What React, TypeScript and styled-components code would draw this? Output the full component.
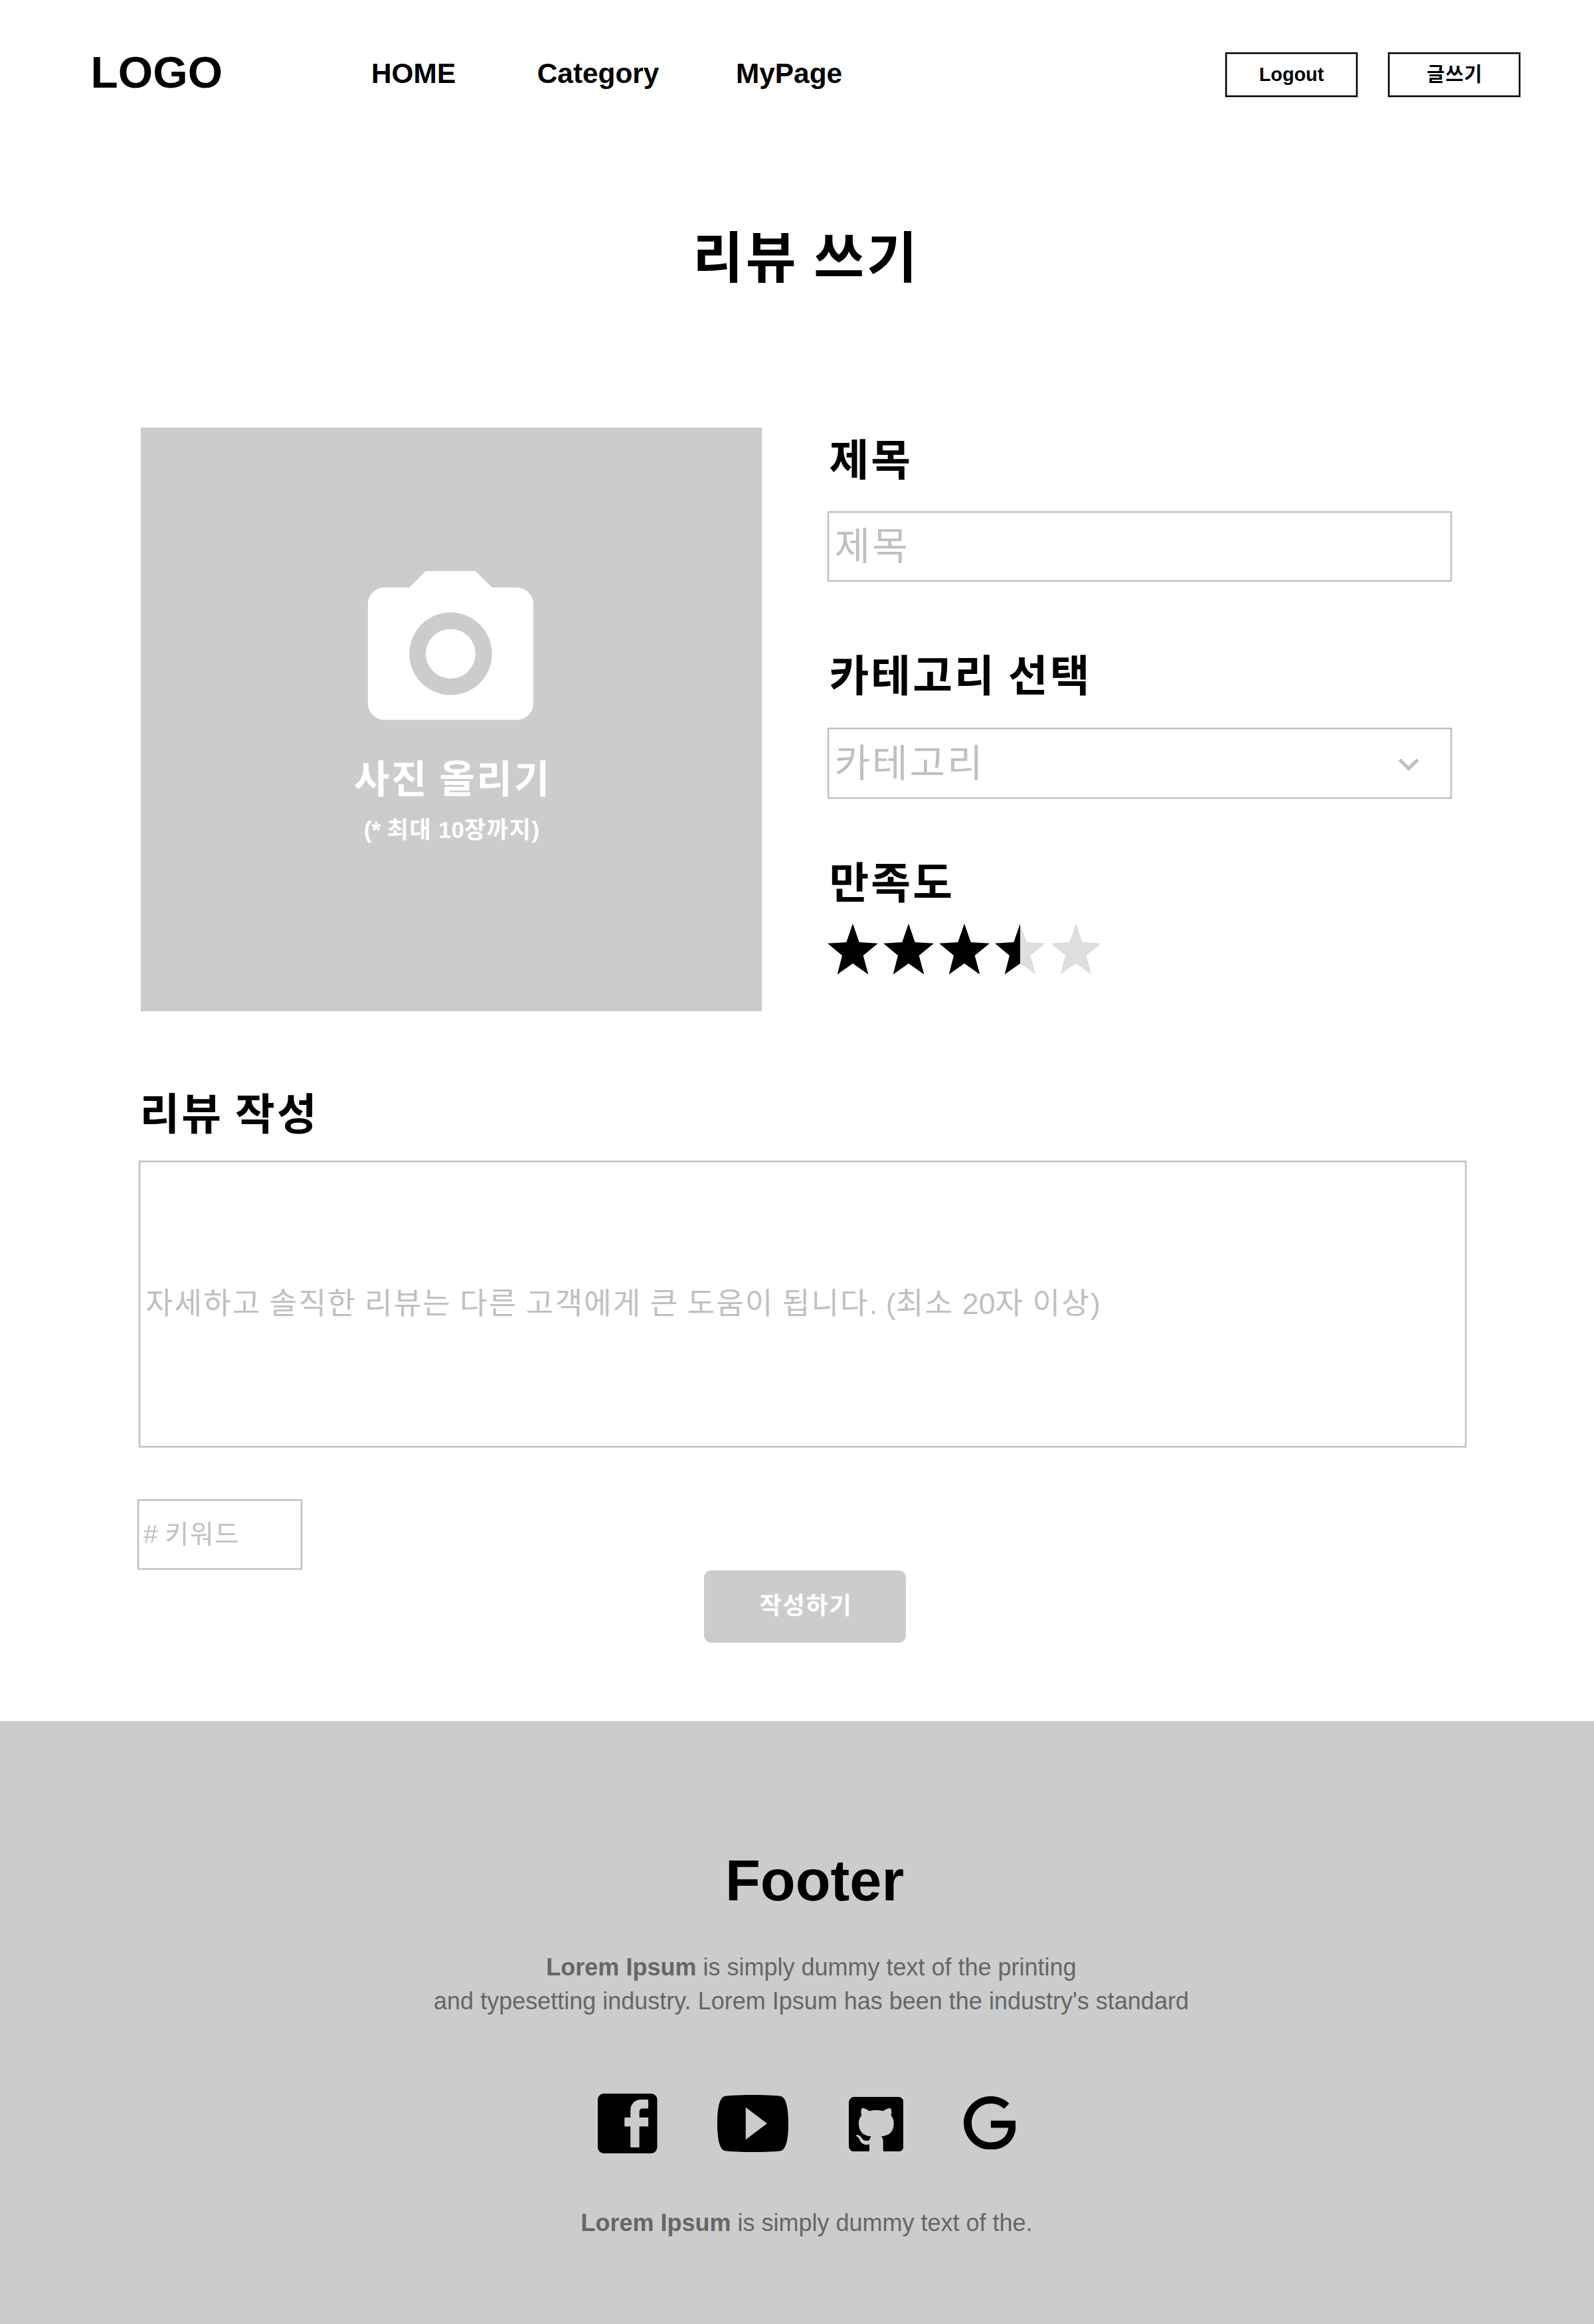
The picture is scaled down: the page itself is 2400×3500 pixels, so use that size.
import React from 'react';
import styled, { createGlobalStyle, css } from 'styled-components';

const GlobalStyle = createGlobalStyle`
  *, *::before, *::after { box-sizing: border-box; }
  body {
    margin: 0;
    background: #fff;
    color: #000;
    font-family: "Liberation Sans", "Noto Sans CJK KR", sans-serif;
  }
`;

/* Hangul is set slightly open, with the word gaps kept tight. */
const hangul = css`
  letter-spacing: 0.047em;
  word-spacing: -0.05em;
`;

const Latin = styled.span`
  letter-spacing: 0;
  word-spacing: 0;
`;

const Page = styled.div`
  width: 2400px;
  height: 3500px;
  display: flex;
  flex-direction: column;
  overflow: hidden;
  white-space: nowrap;
`;

/* Header */

const Header = styled.header`
  height: 225px;
  flex: none;
  display: flex;
  align-items: center;
  padding: 0 111px 0 136.5px;
`;

const Logo = styled.div`
  width: 422.5px;
  padding-bottom: 9px;
  font-size: 67.5px;
  line-height: 75px;
  font-weight: 700;
`;

const Nav = styled.nav`
  display: flex;
  padding-bottom: 4px;
`;

const NavLink = styled.a<{ $after?: number }>`
  margin-right: ${(p) => p.$after ?? 0}px;
  font-size: 42.4px;
  line-height: 47px;
  font-weight: 700;
`;

const Actions = styled.div`
  display: flex;
  gap: 46px;
  margin-left: auto;
`;

const OutlineButton = styled.div<{ $hangul?: boolean }>`
  width: 199px;
  height: 67px;
  display: flex;
  align-items: center;
  justify-content: center;
  border: 2px solid #000;
  box-shadow: 0 0 0 1px rgba(0, 0, 0, 0.25), inset 0 0 0 1px rgba(0, 0, 0, 0.35);
  font-size: 28.8px;
  line-height: 33px;
  font-weight: 700;
  ${(p) =>
    p.$hangul &&
    css`
      ${hangul}
      padding-left: 2px;
      font-size: 29.2px;
    `}
`;

/* Review form */

const Main = styled.main`
  height: 2367px;
  flex: none;
  display: flex;
  flex-direction: column;
  padding: 115px 192px 0 209px;
`;

const PageTitle = styled.h1`
  margin: 0 0 205px;
  padding-left: 11px;
  font-size: 82.5px;
  line-height: 99px;
  font-weight: 700;
  text-align: center;
  ${hangul}
`;

const FormRow = styled.section`
  display: flex;
  align-items: flex-start;
  padding-left: 3px;
`;

const PhotoDrop = styled.div`
  width: 935px;
  height: 879px;
  flex: none;
  display: flex;
  flex-direction: column;
  align-items: center;
  padding-top: 191px;
  background: #ccc;
  color: #fff;
`;

const CameraIcon = styled.svg`
  width: 299px;
  height: 299px;
  margin-right: 2px;
  flex: none;
  fill: #fff;
`;

const PhotoTitle = styled.div`
  margin-top: 6px;
  padding-left: 4px;
  font-size: 58.2px;
  line-height: 67px;
  font-weight: 700;
  ${hangul}
`;

const PhotoHint = styled.div`
  margin-top: 22px;
  padding-left: 1px;
  font-size: 35px;
  line-height: 41px;
  font-weight: 700;
  ${hangul}
`;

const Fields = styled.div`
  width: 940px;
  margin-left: 99px;
  padding-top: 13px;
`;

const FieldLabel = styled.h2<{ $top?: number; $bottom?: number; $left?: number }>`
  margin: ${(p) => p.$top ?? 0}px 0 ${(p) => p.$bottom ?? 0}px;
  padding-left: ${(p) => p.$left ?? 2.5}px;
  font-size: 65px;
  line-height: 73px;
  padding-bottom: 1px;
  font-weight: 700;
  ${hangul}
`;

const Box = styled.div`
  display: flex;
  align-items: center;
  border: 2px solid #c0c0c0;
  box-shadow: 0 0 0 1px rgba(192, 192, 192, 0.15), inset 0 0 0 1px rgba(192, 192, 192, 0.35);
  color: #c0c0c0;
  ${hangul}
`;

const TitleInput = styled(Box)`
  height: 106px;
  padding: 0 0 1px 8.5px;
  font-size: 58.4px;
  line-height: 67px;
`;

const CategorySelect = styled(Box)`
  height: 107px;
  padding: 0 0 1px 8.5px;
  font-size: 58.4px;
  line-height: 67px;
`;

const ChevronIcon = styled.svg`
  width: 62px;
  height: 62px;
  margin: 3px 32px 0 auto;
  fill: #c0c0c0;
`;

const Stars = styled.div`
  display: flex;
  gap: 8.1px;
`;

const StarIcon = styled.svg`
  width: 76px;
  height: 77px;
  display: block;
`;

const ReviewSection = styled.section`
  display: flex;
  flex-direction: column;
  margin-top: 119px;
`;

const ReviewInput = styled(Box)`
  height: 432px;
  padding: 0 0 1px 8px;
  font-size: 45.1px;
  line-height: 53px;
`;

const KeywordInput = styled(Box)`
  width: 248px;
  height: 106px;
  margin: 78px 0 0 -2px;
  padding: 0 0 1px 7px;
  font-size: 38.8px;
  line-height: 44px;
`;

const SubmitButton = styled.div`
  width: 304px;
  height: 109px;
  align-self: center;
  display: flex;
  align-items: center;
  justify-content: center;
  margin: 1px 0 0 7px;
  padding: 0 0 1px 3px;
  border-radius: 11px;
  background: #ccc;
  color: #fff;
  font-size: 36.2px;
  line-height: 42px;
  font-weight: 700;
  ${hangul}
`;

/* Footer */

const Footer = styled.footer`
  flex: 1;
  display: flex;
  flex-direction: column;
  align-items: center;
  padding: 192px 0 0 43px;
  background: #ccc;
`;

const FooterTitle = styled.h2`
  margin: 0 0 57px;
  padding-left: 10px;
  font-size: 86.5px;
  line-height: 96px;
  font-weight: 700;
`;

const FooterText = styled.p<{ $right?: number }>`
  margin: 0;
  padding-right: ${(p) => p.$right ?? 0}px;
  color: #666;
  font-size: 36px;
  line-height: 51px;
  text-align: center;
`;

const Socials = styled.div`
  height: 90px;
  display: flex;
  align-items: center;
  gap: 90.3px;
  margin: 114px 0 79px;
  padding-right: 13.5px;
`;

const SocialIcon = styled.svg<{ $lift?: number; $left?: number }>`
  margin-bottom: ${(p) => p.$lift ?? 0}px;
  margin-left: ${(p) => p.$left ?? 0}px;
  display: block;
  fill: #000;
`;

const STAR = '38,0 47.7,28 76,29.7 53.7,48 61.3,76.5 38,60 14.7,76.5 22,48 0,29.7 28.3,28';

function Star({ fill }: { fill: number }) {
  return (
    <StarIcon viewBox="0 0 76 77">
      <polygon points={STAR} fill={fill === 1 ? '#000' : '#dedede'} />
      {fill === 0.5 && <polygon points="38,0 38,60 14.7,76.5 22,48 0,29.7 28.3,28" fill="#000" />}
    </StarIcon>
  );
}

export default function App() {
  return (
    <Page>
      <GlobalStyle />
      <Header>
        <Logo>LOGO</Logo>
        <Nav>
          <NavLink $after={122.5}>HOME</NavLink>
          <NavLink $after={115.5}>Category</NavLink>
          <NavLink>MyPage</NavLink>
        </Nav>
        <Actions>
          <OutlineButton>Logout</OutlineButton>
          <OutlineButton $hangul>글쓰기</OutlineButton>
        </Actions>
      </Header>

      <Main>
        <PageTitle>리뷰 쓰기</PageTitle>
        <FormRow>
          <PhotoDrop>
            <CameraIcon viewBox="0 0 24 24">
              <path d="M4,4H7L9,2H15L17,4H20A2,2 0 0,1 22,6V18A2,2 0 0,1 20,20H4A2,2 0 0,1 2,18V6A2,2 0 0,1 4,4M12,7A5,5 0 0,0 7,12A5,5 0 0,0 12,17A5,5 0 0,0 17,12A5,5 0 0,0 12,7M12,9A3,3 0 0,1 15,12A3,3 0 0,1 12,15A3,3 0 0,1 9,12A3,3 0 0,1 12,9Z" />
            </CameraIcon>
            <PhotoTitle>사진 올리기</PhotoTitle>
            <PhotoHint>
              <Latin>(* </Latin>최대 <Latin>10</Latin>장까지<Latin>)</Latin>
            </PhotoHint>
          </PhotoDrop>
          <Fields>
            <FieldLabel $bottom={39}>제목</FieldLabel>
            <TitleInput>제목</TitleInput>
            <FieldLabel $top={106} $bottom={40}>카테고리 선택</FieldLabel>
            <CategorySelect>
              카테고리
              <ChevronIcon viewBox="0 0 24 24">
                <path d="M7.41,8.58L12,13.17L16.59,8.58L18,10L12,16L6,10L7.41,8.58Z" />
              </ChevronIcon>
            </CategorySelect>
            <FieldLabel $top={91} $bottom={23}>만족도</FieldLabel>
            <Stars>
              {[1, 1, 1, 0.5, 0].map((fill, i) => (
                <Star key={i} fill={fill} />
              ))}
            </Stars>
          </Fields>
        </FormRow>

        <ReviewSection>
          <FieldLabel $bottom={32} $left={1.5}>리뷰 작성</FieldLabel>
          <ReviewInput>
            <span>
              자세하고 솔직한 리뷰는 다른 고객에게 큰 도움이 됩니다<Latin>. (</Latin>최소 <Latin>20</Latin>자 이상<Latin>)</Latin>
            </span>
          </ReviewInput>
          <KeywordInput>
            <span>
              <Latin># </Latin>키워드
            </span>
          </KeywordInput>
          <SubmitButton>작성하기</SubmitButton>
        </ReviewSection>
      </Main>

      <Footer>
        <FooterTitle>Footer</FooterTitle>
        <FooterText>
          <b>Lorem Ipsum</b> is simply dummy text of the printing
          <br />
          and typesetting industry. Lorem Ipsum has been the industry's standard
        </FooterText>
        <Socials>
          <SocialIcon width="89.5" height="90" viewBox="2 2 20 20" preserveAspectRatio="none">
            <path d="M4,2H20A2,2 0 0,1 22,4V20A2,2 0 0,1 20,22H4A2,2 0 0,1 2,20V4A2,2 0 0,1 4,2M19,4H16.5A3.5,3.5 0 0,0 13,7.5V10H11V13H13V20H16V13H19V10H16V8A1,1 0 0,1 17,7H19V4Z" />
          </SocialIcon>
          <SocialIcon width="107" height="86" viewBox="2 4 20 16" preserveAspectRatio="none">
            <path d="M10,16.5V7.5L16,12M20,4.4C19.4,4.2 15.7,4 12,4C8.3,4 4.6,4.19 4,4.38C2.44,4.9 2,8.4 2,12C2,15.59 2.44,19.1 4,19.61C4.6,19.81 8.3,20 12,20C15.7,20 19.4,19.81 20,19.61C21.56,19.1 22,15.59 22,12C22,8.4 21.56,4.91 20,4.4Z" />
          </SocialIcon>
          <SocialIcon $lift={-2} width="82.7" height="82.5" viewBox="2 2 20 20" preserveAspectRatio="none">
            <path d="M4,2H20A2,2 0 0,1 22,4V20A2,2 0 0,1 20,22H14.85C14.5,21.92 14.5,21.24 14.5,21V18.26C14.5,17.33 14.17,16.72 13.81,16.41C16.04,16.16 18.38,15.32 18.38,11.5C18.38,10.39 18,9.5 17.35,8.79C17.45,8.54 17.8,7.5 17.25,6.15C17.25,6.15 16.41,5.88 14.5,7.17C13.71,6.95 12.85,6.84 12,6.84C11.15,6.84 10.29,6.95 9.5,7.17C7.59,5.88 6.75,6.15 6.75,6.15C6.2,7.5 6.55,8.54 6.65,8.79C6,9.5 5.62,10.39 5.62,11.5C5.62,15.31 7.95,16.17 10.17,16.42C9.89,16.67 9.63,17.11 9.54,17.76C8.97,18 7.5,18.45 6.63,16.93C6.63,16.93 6.1,15.97 5.1,15.9C5.1,15.9 4.12,15.88 5,16.5C5,16.5 5.68,16.81 6.14,17.97C6.14,17.97 6.73,19.91 9.5,19.31V21C9.5,21.24 9.5,21.92 9.14,22H4A2,2 0 0,1 2,20V4A2,2 0 0,1 4,2Z" />
          </SocialIcon>
          <SocialIcon $lift={2} width="78.5" height="80.5" viewBox="2.03 2 19.47 20" preserveAspectRatio="none">
            <path d="M21.35,11.1H12.18V13.83H18.69C18.36,17.64 15.19,19.27 12.19,19.27C8.36,19.27 5,16.25 5,12C5,7.9 8.2,4.73 12.2,4.73C15.29,4.73 17.1,6.7 17.1,6.7L19,4.72C19,4.72 16.56,2 12.1,2C6.42,2 2.03,6.8 2.03,12C2.03,17.05 6.16,22 12.25,22C17.6,22 21.5,18.33 21.5,12.91C21.5,11.76 21.35,11.1 21.35,11.1Z" />
          </SocialIcon>
        </Socials>
        <FooterText $right={14}>
          <b>Lorem Ipsum</b> is simply dummy text of the.
        </FooterText>
      </Footer>
    </Page>
  );
}
